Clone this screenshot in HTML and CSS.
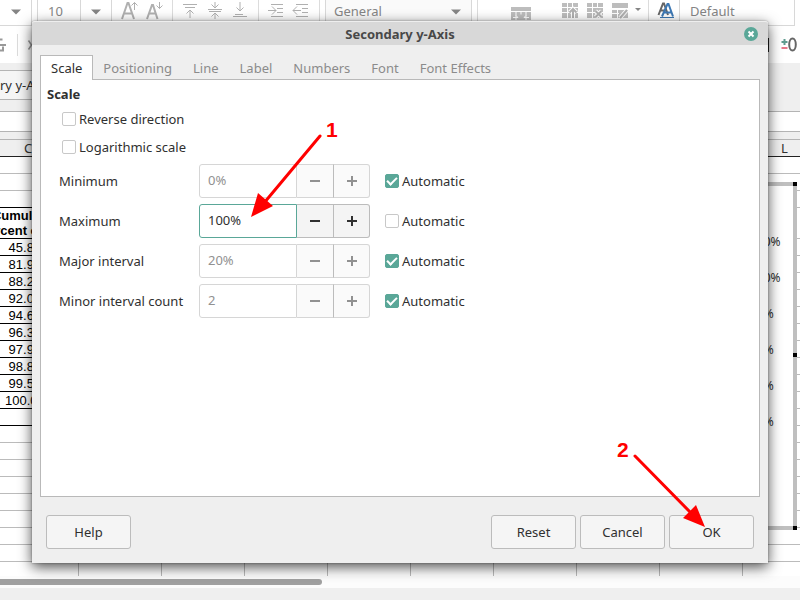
FILE: index.html
```html
<!DOCTYPE html>
<html lang="en">
<head>
<meta charset="utf-8">
<title>Secondary y-Axis</title>
<link rel="stylesheet" href="styles.css">
</head>
<body>
<div class="app">
  <div class="toolbar">
    <div class="combo combo-blank"><select aria-label="Font name"><option></option></select><svg class="caret" viewBox="0 0 10 6"><path d="M0 0.5h10L5 5.5z"/></svg></div>
    <div class="combo combo-size"><select aria-label="Font size"><option>10</option></select><svg class="caret" viewBox="0 0 10 6"><path d="M0 0.5h10L5 5.5z"/></svg></div>
    <div class="tools">
      <button aria-label="Increase size"><svg viewBox="0 0 18 18"><path class="letter" d="M2 17L7.500 1h1L14 17M4 11.500h8"/><path d="M14.500 8V0.500M11.500 3.500l3-3 3 3"/></svg></button>
      <button aria-label="Decrease size"><svg viewBox="0 0 18 18"><path class="letter" d="M2 17L7 3h1L12.500 17M4 11.500h7"/><path d="M14.500 0v6.500M11.500 3.500l3 3 3-3"/></svg></button>
    </div>
    <i class="sep"></i>
    <div class="tools">
      <button aria-label="Align top"><svg viewBox="0 0 18 18"><path d="M2 2.500h14M4 5.500h10M9 16V8M5.500 11.500L9 8l3.500 3.500"/></svg></button>
      <button aria-label="Center vertically"><svg viewBox="0 0 18 18"><path d="M2 7.500h14M3 9.500h12M9 0v6M5.500 2.500L9 6l3.500-3.500M9 17v-6M5.500 14.500L9 11l3.500 3.500"/></svg></button>
      <button aria-label="Align bottom"><svg viewBox="0 0 18 18"><path d="M4 12.500h8M2 14.500h14M9 0v9M5.500 5.500L9 9l3.500-3.500"/></svg></button>
    </div>
    <i class="sep"></i>
    <div class="tools">
      <button aria-label="Increase indent"><svg viewBox="0 0 18 18"><path d="M4 2.500h12M10 6.500h6M10 10.500h6M4 14.500h12M1 8.500h8M5 4.500l4 4-4 4"/></svg></button>
      <button aria-label="Decrease indent"><svg viewBox="0 0 18 18"><path d="M4 2.500h12M10 6.500h6M10 10.500h6M4 14.500h12M1 8.500h8M5 4.500l-4 4 4 4"/></svg></button>
    </div>
    <i class="sep"></i>
    <div class="combo combo-format"><select aria-label="Number format"><option>General</option></select><svg class="caret" viewBox="0 0 10 6"><path d="M0 0.500h10L5 5.500z"/></svg></div>
    <i class="sep"></i>
    <div class="tools tools-lone">
      <button aria-label="Merge cells"><svg class="merge" viewBox="0 0 20 18"><path class="fill" d="M0 5h20v13H0z"/><path class="cut" d="M0 9.500h20M5 9.500v9M10 9.500v3M15 9.500v9M2 15.500h5l-2-2M18 15.500h-5l2-2"/></svg></button>
    </div>
    <div class="tools">
      <button aria-label="Insert rows"><svg viewBox="0 0 18 18"><path class="fill" d="M1 1h16v15H1z"/><path class="cut" d="M1 5.500h16M1 10.500h16M6.500 1v15M11.500 1v5"/><path class="halo" d="M12 16V7M8.500 10.500L12 7l3.500 3.500"/><path class="bold" d="M12 16V7M8.500 10.500L12 7l3.500 3.500"/></svg></button>
      <button aria-label="Delete rows"><svg viewBox="0 0 18 18"><path class="fill" d="M1 1h16v15H1z"/><path class="cut" d="M1 5.500h16M1 10.500h16M6.500 1v15M11.500 1v5"/><path class="halo" d="M9.500 9l6 6M15.500 9l-6 6"/><path class="bold" d="M9.500 9l6 6M15.500 9l-6 6"/></svg></button>
      <button aria-label="Edit rows"><svg viewBox="0 0 18 18"><path class="fill" d="M1 1h16v5H1zM1 8h16v8H1z"/><path class="cut" d="M6.500 8v8M1 11.500h7"/><path class="halo" d="M9 16l7-8"/><path class="bold" d="M9 16l7-8"/></svg></button>
    </div>
    <svg class="caret caret-small" viewBox="0 0 6 4"><path d="M0 0h6L3 3z"/></svg>
    <i class="sep"></i>
    <div class="tools">
      <button aria-label="Styles"><svg viewBox="0 0 18 18"><path class="dark" d="M1.500 13L6 1.500h1L11 13M3 8.500h6"/><path class="blue" d="M5 14.500L10.500 2h1L16 14.500M7.500 10.500h7"/><path class="blue thin" d="M3 15.500h14"/></svg></button>
    </div>
    <div class="combo combo-style"><select aria-label="Cell style"><option>Default</option></select></div>
  </div>

  <div class="toolbar toolbar-chart">
    <svg class="chart-tool" viewBox="0 0 6 18"><path d="M0 3.500h2.500M0 9h6M0 14.500h3v-4"/></svg>
    <i class="sep tall"></i>
    <svg class="chart-tool" viewBox="0 0 8 14"><path class="bold" d="M2 1l4 6-4 6"/></svg>
    <div class="chart-end">
      <i class="mark"></i>
      <svg class="decimals" viewBox="0 0 16 16"><path class="green" d="M3.500 2v6M0.500 5h6"/><path class="red" d="M0.500 11h6"/><ellipse cx="11.500" cy="7.500" rx="3.300" ry="6"/></svg>
    </div>
  </div>

  <div class="formula-zone"><div class="name-box">ry y-Axis</div></div>
  <div class="ruler"></div>

  <div class="sheet">
    <table>
      <colgroup><col class="col-first"><col span="10"></colgroup>
      <thead><tr><th>C</th><th>D</th><th>E</th><th>F</th><th>G</th><th>H</th><th>I</th><th>J</th><th>K</th><th>L</th><th></th></tr></thead>
      <tbody>
        <tr><td colspan="11"></td></tr>
        <tr><td colspan="11"></td></tr>
        <tr class="edge"><td></td><td colspan="10"></td></tr>
        <tr class="data title"><td>Cumulative<br>percent of total</td><td colspan="10"></td></tr>
        <tr class="data"><td>45.8%</td><td colspan="10"></td></tr>
        <tr class="data"><td>81.9%</td><td colspan="10"></td></tr>
        <tr class="data"><td>88.2%</td><td colspan="10"></td></tr>
        <tr class="data"><td>92.0%</td><td colspan="10"></td></tr>
        <tr class="data"><td>94.6%</td><td colspan="10"></td></tr>
        <tr class="data"><td>96.3%</td><td colspan="10"></td></tr>
        <tr class="data"><td>97.9%</td><td colspan="10"></td></tr>
        <tr class="data"><td>98.8%</td><td colspan="10"></td></tr>
        <tr class="data"><td>99.5%</td><td colspan="10"></td></tr>
        <tr class="data"><td>100.0%</td><td colspan="10"></td></tr>
        <tr class="data"><td></td><td colspan="10"></td></tr>
        <tr><td colspan="11"></td></tr>
        <tr><td colspan="11"></td></tr>
        <tr><td colspan="11"></td></tr>
        <tr><td colspan="11"></td></tr>
        <tr><td colspan="11"></td></tr>
        <tr><td colspan="11"></td></tr>
        <tr><td colspan="11"></td></tr>
        <tr><td colspan="11"></td></tr>
        <tr class="columns"><td></td><td></td><td></td><td></td><td></td><td></td><td></td><td></td><td></td><td></td><td></td></tr>
      </tbody>
    </table>
    <div class="chart">
      <i class="handle top"></i><i class="handle middle"></i><i class="handle bottom"></i>
      <div class="axis"><span>120%</span><span>100%</span><span>80%</span><span>60%</span><span>40%</span><span>20%</span></div>
    </div>
  </div>
  <div class="scrollbar"><div class="thumb"></div></div>
  <div class="statusbar"></div>
</div>

<section class="dialog" role="dialog" aria-labelledby="dialog-title">
  <header class="titlebar">
    <h1 id="dialog-title">Secondary y-Axis</h1>
    <button class="close" aria-label="Close"><svg viewBox="0 0 14 14"><path d="M4.500 4.500l5 5M9.500 4.500l-5 5"/></svg></button>
  </header>
  <nav class="tabs" role="tablist">
    <button role="tab" class="tab active" aria-selected="true">Scale</button>
    <button role="tab" class="tab">Positioning</button>
    <button role="tab" class="tab">Line</button>
    <button role="tab" class="tab">Label</button>
    <button role="tab" class="tab">Numbers</button>
    <button role="tab" class="tab">Font</button>
    <button role="tab" class="tab">Font Effects</button>
  </nav>
  <div class="panel" role="tabpanel">
    <h2>Scale</h2>
    <label class="check option"><input type="checkbox">Reverse direction</label>
    <label class="check option"><input type="checkbox">Logarithmic scale</label>
    <div class="fields">
      <label for="minimum">Minimum</label>
      <div class="spin off"><input id="minimum" type="text" value="0%" disabled><button aria-label="Decrease" disabled><svg viewBox="0 0 12 12"><path d="M1 6h10"/></svg></button><button aria-label="Increase" disabled><svg viewBox="0 0 12 12"><path d="M1 6h10M6 1v10"/></svg></button></div>
      <label class="check"><input type="checkbox" checked>Automatic</label>

      <label for="maximum">Maximum</label>
      <div class="spin on"><input id="maximum" type="text" value="100%"><button aria-label="Decrease"><svg viewBox="0 0 12 12"><path d="M1 6h10"/></svg></button><button aria-label="Increase"><svg viewBox="0 0 12 12"><path d="M1 6h10M6 1v10"/></svg></button></div>
      <label class="check"><input type="checkbox">Automatic</label>

      <label for="major">Major interval</label>
      <div class="spin off"><input id="major" type="text" value="20%" disabled><button aria-label="Decrease" disabled><svg viewBox="0 0 12 12"><path d="M1 6h10"/></svg></button><button aria-label="Increase" disabled><svg viewBox="0 0 12 12"><path d="M1 6h10M6 1v10"/></svg></button></div>
      <label class="check"><input type="checkbox" checked>Automatic</label>

      <label for="minor">Minor interval count</label>
      <div class="spin off"><input id="minor" type="text" value="2" disabled><button aria-label="Decrease" disabled><svg viewBox="0 0 12 12"><path d="M1 6h10"/></svg></button><button aria-label="Increase" disabled><svg viewBox="0 0 12 12"><path d="M1 6h10M6 1v10"/></svg></button></div>
      <label class="check"><input type="checkbox" checked>Automatic</label>
    </div>
  </div>
  <footer class="actions">
    <button class="help">Help</button>
    <button>Reset</button>
    <button>Cancel</button>
    <button>OK</button>
  </footer>
</section>

<svg class="callouts" viewBox="0 0 800 600">
  <path class="shaft" d="M320 136L264 203M635 456L692 514"/>
  <path class="head" d="M251 217l7-24 15 13zM705 527l-9-22-13 13z"/>
  <text x="326" y="137">1</text>
  <text x="617" y="457">2</text>
</svg>
</body>
</html>
```
FILE: styles.css
```css
* {
  box-sizing: border-box;
}

body {
  margin: 0;
  position: relative;
  min-height: 100vh;
  overflow: hidden;
  background: #efefef;
  color: #303030;
  font: 13px/18px "Noto Sans", sans-serif;
}

button,
input,
select {
  font: inherit;
  color: inherit;
}

svg {
  display: block;
}

/* Spreadsheet window */

.app {
  display: flex;
  flex-direction: column;
  min-height: 100vh;
}

.toolbar {
  display: flex;
  height: 26px;
  background: #fff;
}

.toolbar svg {
  fill: none;
  stroke: #b0b0b0;
  stroke-width: 1;
}

.combo {
  position: relative;
  flex: none;
  display: flex;
  align-items: center;
  padding-bottom: 2px;
  border: solid #d8d8d8;
  border-width: 0 1px 1px;
  color: #858585;
}

.combo select {
  appearance: none;
  flex: 1;
  min-width: 0;
  padding: 0 0 2px 10px;
  border: 0;
  background: none;
}

.toolbar .caret {
  flex: none;
  width: 10px;
  height: 6px;
  margin-right: 10px;
  fill: #858585;
  stroke: none;
}

.toolbar .caret-small {
  width: 6px;
  height: 4px;
  margin: 8px 2px 0;
}

.combo-blank {
  width: 32px;
  margin-right: 5px;
  border-left: 0;
}

.combo-size {
  width: 75px;
}

.combo-size .caret {
  margin-left: 10px;
}

.combo-size select {
  align-self: stretch;
  border-right: 1px solid #d8d8d8;
}

.combo-size + .tools {
  margin-left: 5px;
}

.combo-format {
  width: 147px;
  background: #fafafa;
}

.combo-format select {
  padding-left: 8px;
}

.combo-style {
  width: 116px;
}

.tools {
  flex: none;
  display: flex;
}

.tools-lone {
  margin: 0 25px;
}

.tools button {
  width: 25px;
  padding: 0 3px 4px;
  border: 0;
  background: none;
}

.tools svg {
  width: 18px;
  height: 18px;
}

.tools .merge {
  width: 20px;
}

.toolbar .letter,
.toolbar .bold {
  stroke-width: 2;
}

.toolbar .fill {
  fill: #bdbdbd;
  stroke: none;
}

.toolbar .cut {
  stroke: #fff;
}

.toolbar .halo {
  stroke: #fff;
  stroke-width: 4;
}

.toolbar .dark {
  stroke: #666;
  stroke-width: 2;
}

.toolbar .blue {
  stroke: #3d78b4;
  stroke-width: 2;
}

.toolbar .thin {
  stroke-width: 1;
}

.sep {
  flex: none;
  width: 1px;
  margin: 0 5px;
  background: #dcdcdc;
}

.toolbar-chart {
  height: 37px;
  align-items: center;
}

.toolbar-chart .chart-tool {
  width: 6px;
  height: 18px;
  stroke: #999;
  stroke-width: 2;
}

.toolbar-chart .tall {
  height: 22px;
  margin: 0 9px 0 11px;
}

.chart-end {
  display: flex;
  align-items: center;
  gap: 12px;
  margin-left: auto;
  padding-right: 3px;
}

.mark {
  width: 2px;
  height: 14px;
  background: #222;
}

.toolbar .decimals {
  width: 16px;
  height: 16px;
  stroke: #666;
  stroke-width: 2;
}

.toolbar .decimals .green {
  stroke: #5f9c90;
}

.toolbar .decimals .red {
  stroke: #e8788a;
}

.formula-zone {
  height: 49px;
  padding-top: 7px;
  border-bottom: 1px solid #b4b4b4;
  background: #efefef;
}

.name-box {
  width: 25%;
  height: 30px;
  border: solid #b4b4b4;
  border-width: 1px 0;
  background: #f5f5f5;
  line-height: 28px;
}

.ruler {
  height: 28px;
  border: solid #b4b4b4;
  border-width: 0 0 1px;
  background: linear-gradient(#fff 19px, #b4b4b4 19px, #b4b4b4 20px, #efefef 20px);
}

.sheet {
  position: relative;
  flex: 1;
  overflow: hidden;
  background: #fff;
}

/* The sheet is scrolled part of the way into column C. */
.sheet table {
  width: 932px;
  margin-left: -23px;
  table-layout: fixed;
  border-collapse: separate;
  border-spacing: 0;
  font: 13px/15px "Liberation Sans", sans-serif;
}

.sheet col {
  width: 83px;
}

.sheet .col-first {
  width: 102px;
}

.sheet th {
  height: 17px;
  padding: 0;
  border-bottom: 1px solid #222;
  background: #efefef;
  font: 13px/16px "Noto Sans", sans-serif;
}

.sheet td {
  height: 17px;
  padding: 0;
  border-bottom: 1px solid #bbb;
  color: #000;
  text-align: center;
  white-space: nowrap;
}

.sheet .edge td:first-child,
.sheet .data td:first-child {
  padding-right: 2px;
  border-bottom-color: #000;
}

.sheet .title td {
  height: 31px;
  font-weight: bold;
}

.sheet .columns td {
  height: 14px;
  border-right: 1px solid #bbb;
  border-bottom: 0;
}

.chart {
  position: absolute;
  top: 42px;
  right: 3px;
  width: 50%;
  height: 348px;
  border: 4px solid #bfbfbf;
  background: #fff;
}

.handle {
  position: absolute;
  right: -4px;
  width: 4px;
  height: 4px;
  background: #000;
}

.handle.top {
  top: -4px;
}

.handle.middle {
  top: 167px;
}

.handle.bottom {
  bottom: -4px;
}

.axis {
  display: flex;
  flex-direction: column;
  align-items: flex-start;
  gap: 18px;
  width: 43px;
  margin: 47px 0 0 auto;
  font-size: 12px;
}

.scrollbar {
  height: 12px;
  padding: 3px 0;
  background: #fcfcfc;
}

.thumb {
  width: 322px;
  height: 6px;
  border-radius: 0 3px 3px 0;
  background: #a0a0a0;
}

.statusbar {
  height: 12px;
}

/* Dialog */

.dialog {
  position: absolute;
  inset: 21px 32px 37px;
  display: flex;
  flex-direction: column;
  border-radius: 3px 3px 0 0;
  background: #efefef;
  box-shadow: 0 0 2px rgba(0, 0, 0, 0.4), 0 4px 14px rgba(0, 0, 0, 0.7);
}

.titlebar {
  position: relative;
  display: flex;
  align-items: center;
  height: 24px;
  padding: 0 10px;
  border-top: 1px solid #eee;
  border-radius: 3px 3px 0 0;
  background: #d8d8d8;
}

.titlebar h1 {
  flex: 1;
  margin: 0 -14px 0 0;
  color: #484848;
  font-size: 13px;
  line-height: 18px;
  text-align: center;
}

.close {
  width: 14px;
  height: 14px;
  padding: 0;
  border: 0;
  border-radius: 50%;
  background: #5aa798;
}

.close svg {
  fill: none;
  stroke: #fff;
  stroke-width: 2;
}

.tabs {
  display: flex;
  height: 35px;
  padding: 10px 8px 0;
}

.tab {
  height: 25px;
  padding: 0 10px 1px;
  border: 1px solid transparent;
  border-width: 1px 1px 0 0;
  background: none;
  color: #8b8b8b;
}

.tab.active {
  z-index: 1;
  position: relative;
  border-color: #b9b9b9;
  border-left-width: 1px;
  background: #fff;
  color: #303030;
}

.panel {
  flex: 1;
  margin: -1px 8px 0;
  padding: 5px 6px;
  border: 1px solid #b9b9b9;
  background: #fff;
}

.panel h2 {
  margin: 0;
  font-size: 13px;
  line-height: 18px;
}

.check {
  display: flex;
  align-items: center;
  gap: 3px;
}

.option {
  height: 28px;
  margin-left: 15px;
}

.panel h2 + .option {
  margin-top: 2px;
}

.check input {
  appearance: none;
  display: grid;
  place-items: center;
  width: 14px;
  height: 14px;
  margin: 0;
  border: 1px solid #c8c8c8;
  border-radius: 2px;
  background: #fff;
}

.check input:checked {
  border-color: #5aa798;
  background: #5aa798;
}

.check input:checked::after {
  content: "";
  width: 8px;
  height: 4px;
  margin-bottom: 3px;
  border: solid #fff;
  border-width: 0 0 2px 2px;
  transform: rotate(-45deg);
}

.fields {
  display: grid;
  grid-template-columns: 140px 171px 1fr;
  grid-auto-rows: 34px;
  row-gap: 6px;
  align-items: center;
  margin: 3px 0 0 12px;
}

.fields .check {
  margin-left: 15px;
}

.spin {
  display: flex;
  height: 34px;
}

.spin input {
  flex: 1;
  min-width: 0;
  padding: 0 8px 3px;
  border: 1px solid #d6d6d6;
  border-radius: 3px 0 0 3px;
  background: #fff;
}

.spin button {
  display: grid;
  place-items: center;
  width: 37px;
  padding: 0;
  border: 1px solid #bcbcbc;
  border-left: 0;
  background: #f4f4f4;
}

.spin button:last-child {
  width: 36px;
  border-radius: 0 3px 3px 0;
}

.spin svg {
  width: 12px;
  height: 12px;
  stroke: #303030;
  stroke-width: 2;
}

.spin.on input {
  border-color: #5aa798;
}

.spin.off input {
  color: #919191;
}

.spin.off button {
  border-color: #d6d6d6;
  background: #fafafa;
}

.spin.off button:nth-child(2) {
  border-right-color: #bcbcbc;
}

.spin.off svg {
  stroke: #919191;
}

.actions {
  display: flex;
  gap: 4px;
  padding: 18px 14px 14px;
}

.actions button {
  width: 85px;
  height: 34px;
  padding: 0;
  border: 1px solid #bcbcbc;
  border-radius: 3px;
  background: #f5f5f5;
}

.actions .help {
  margin-right: auto;
}

/* Step callouts */

.callouts {
  position: absolute;
  inset: 0;
  width: 100%;
  height: 100%;
  pointer-events: none;
}

.shaft {
  fill: none;
  stroke: #f00;
  stroke-width: 3;
  stroke-linecap: round;
}

.head,
.callouts text {
  fill: #f00;
}

.callouts text {
  font: bold 21px "Liberation Sans", sans-serif;
}
```
